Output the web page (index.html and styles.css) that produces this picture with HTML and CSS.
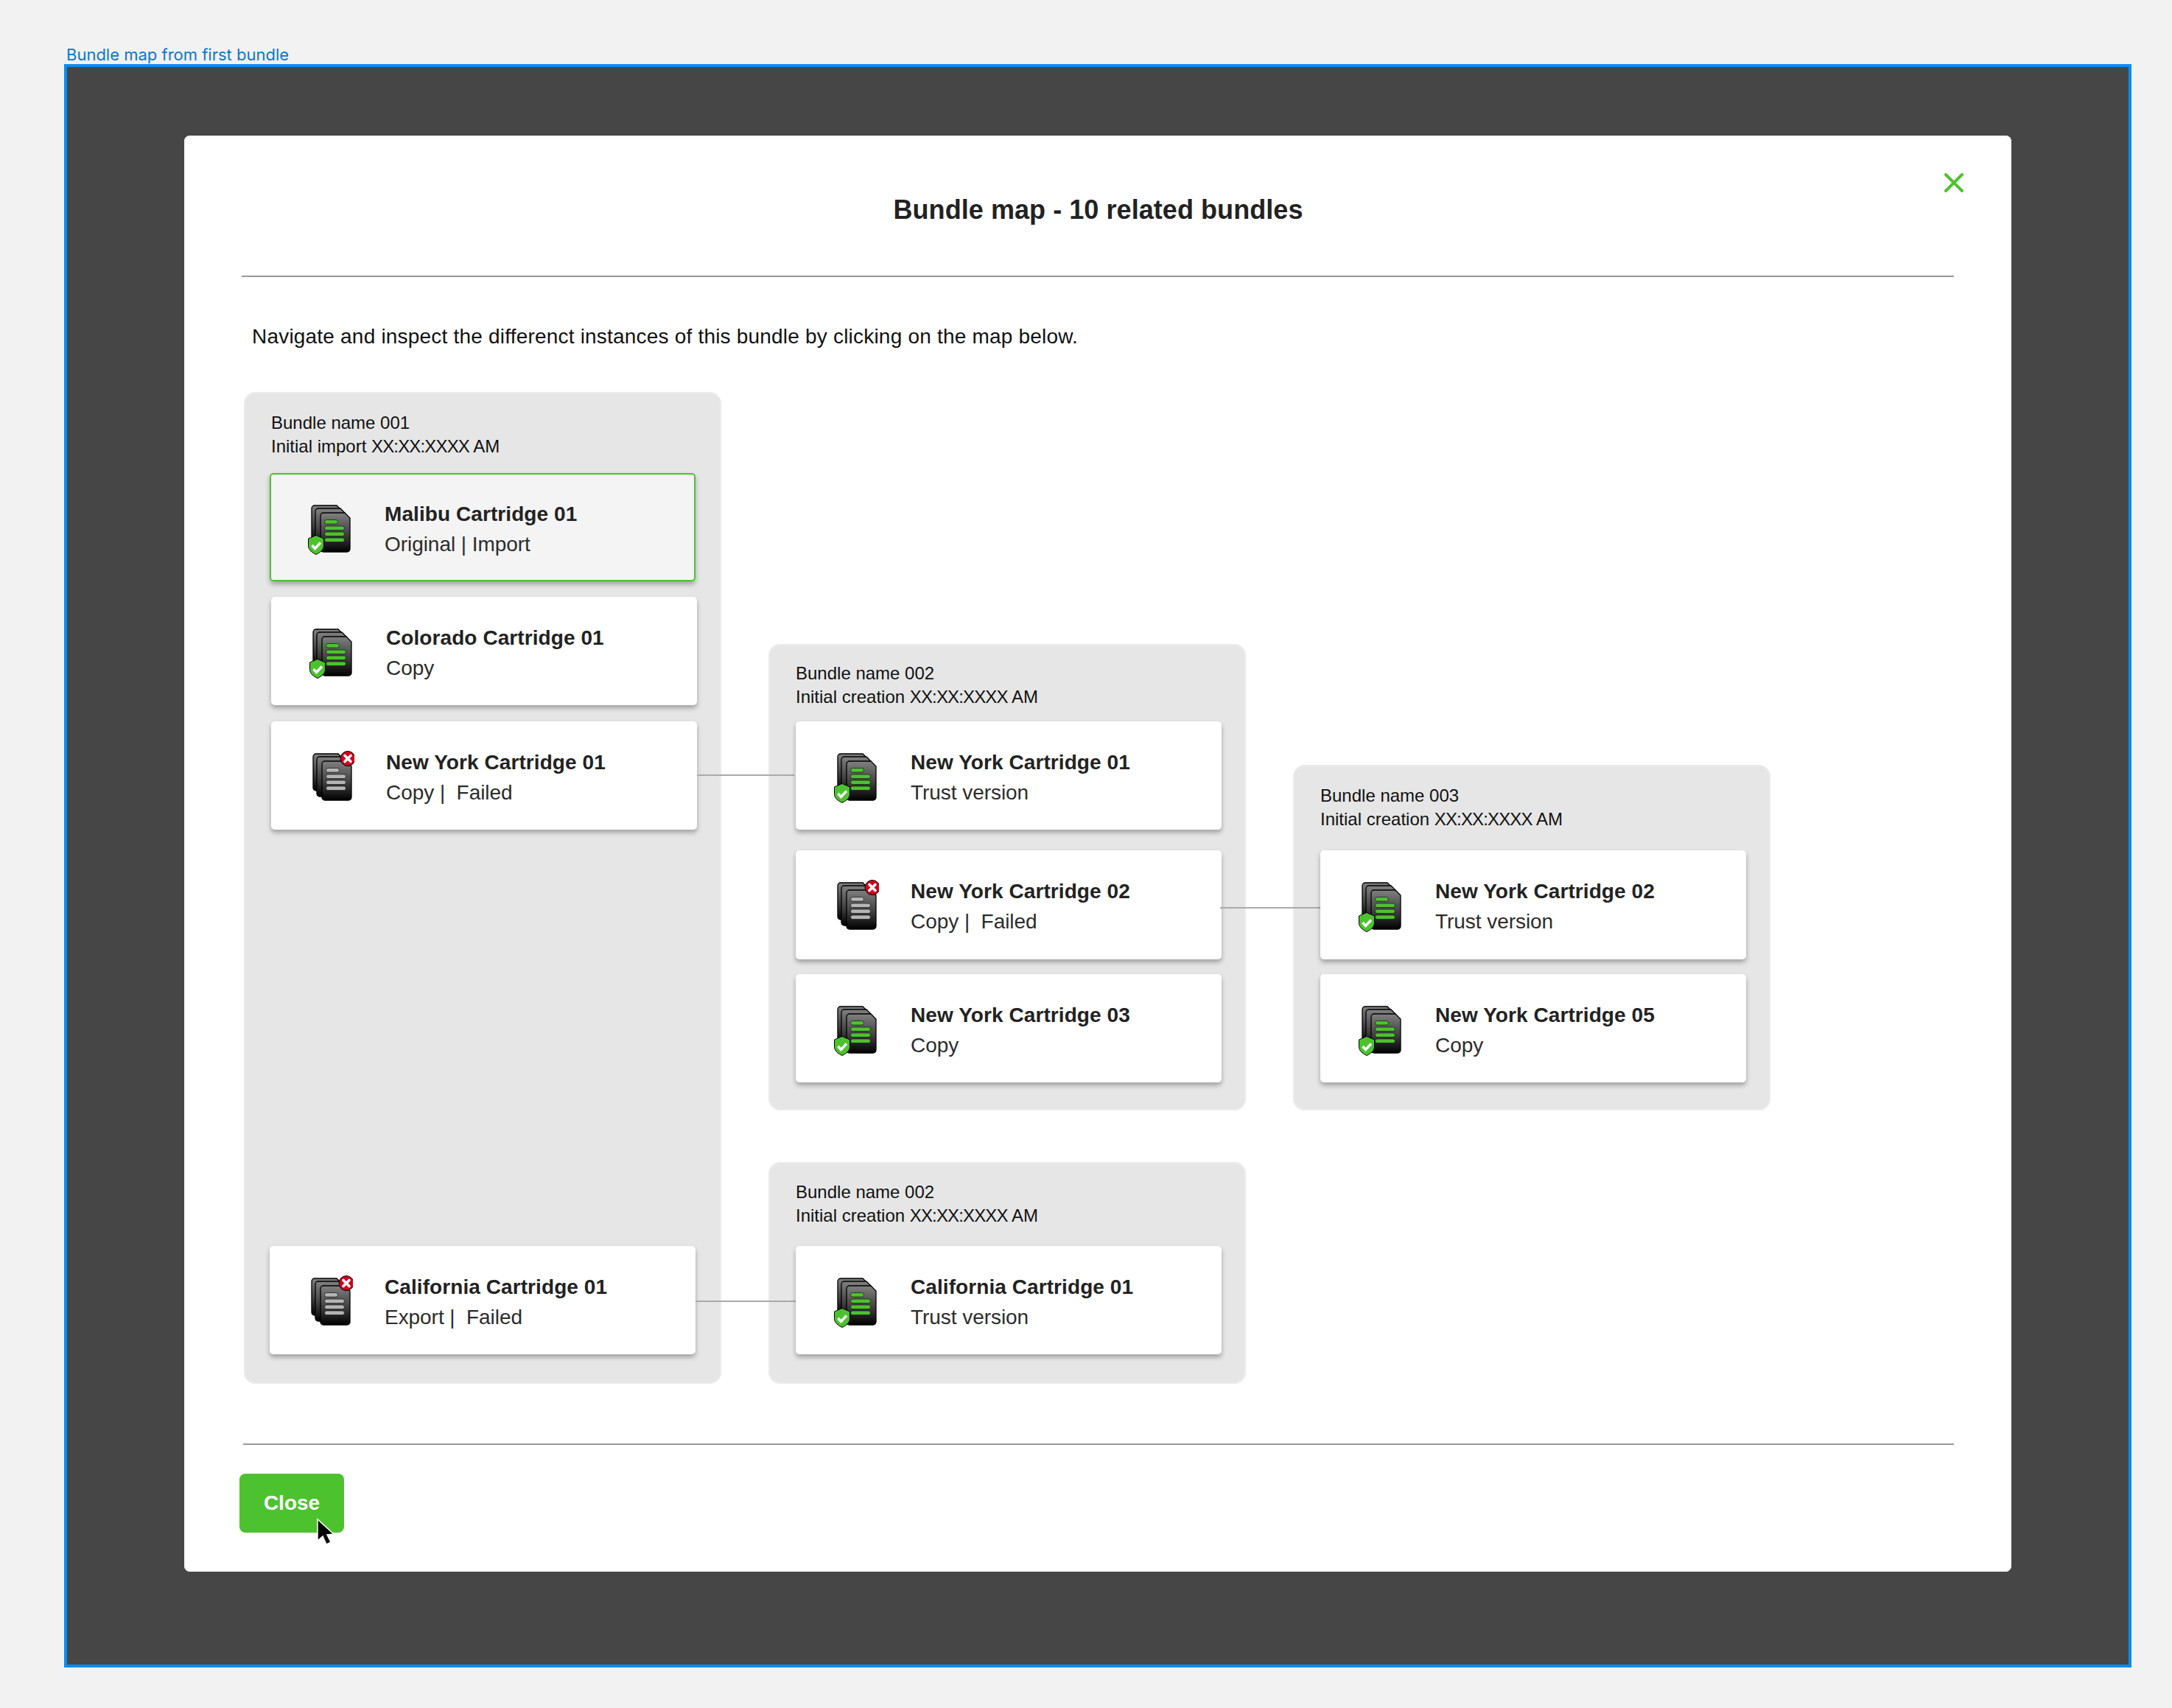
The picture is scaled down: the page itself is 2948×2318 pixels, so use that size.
FILE: index.html
```html
<!DOCTYPE html>
<html lang="en">
<head>
<meta charset="utf-8">
<title>Bundle map</title>
<link rel="stylesheet" href="styles.css">
</head>
<body>
<svg class="defs" aria-hidden="true">
  <defs>
    <linearGradient id="pg" x1="0" y1="0" x2="0" y2="1">
      <stop offset="0" stop-color="#808080"/>
      <stop offset="0.55" stop-color="#404040"/>
      <stop offset="1" stop-color="#000"/>
    </linearGradient>
    <symbol id="stack" viewBox="0 -3 62 72">
      <path d="M10 1h30l6 6v40a4 4 0 0 1-4 4H10a4 4 0 0 1-4-4V5a4 4 0 0 1 4-4z" fill="url(#pg)" stroke="#000" stroke-width="1.3"/>
      <path d="M15 5h30l6 6v44a4 4 0 0 1-4 4H15a4 4 0 0 1-4-4V9a4 4 0 0 1 4-4z" fill="url(#pg)" stroke="#000" stroke-width="1.3"/>
      <path d="M22 11h29l7 7v42a4 4 0 0 1-4 4H22a4 4 0 0 1-4-4V15a4 4 0 0 1 4-4z" fill="url(#pg)" stroke="#000" stroke-width="1.3"/>
    </symbol>
    <symbol id="ok" viewBox="0 -3 62 72">
      <use href="#stack" x="0" y="-3" width="62" height="72"/>
      <g fill="#4dc22f" stroke="#111" stroke-width="0.7">
        <rect x="23.5" y="20.5" width="18" height="5.6" rx="2.8"/>
        <rect x="23.5" y="29" width="27" height="5.6" rx="2.8"/>
        <rect x="23.5" y="37" width="27" height="5.6" rx="2.8"/>
        <rect x="23.5" y="45" width="27" height="5.6" rx="2.8"/>
      </g>
      <path d="M12 41.500l10.500 4.500v9.500c0 6-5.500 9.500-10.500 12c-5-2.500-10.500-6-10.500-12v-9.500z" fill="#4dc22f" stroke="#000" stroke-width="1"/>
      <path d="M6.500 55l4 4.500l7.500-8" fill="none" stroke="#fff" stroke-width="3.400"/>
    </symbol>
    <symbol id="bad" viewBox="0 -3 62 72">
      <use href="#stack" x="0" y="-3" width="62" height="72"/>
      <g fill="#b5b5b5" stroke="#111" stroke-width="0.7">
        <rect x="23.5" y="20.5" width="18" height="5.6" rx="2.8"/>
        <rect x="23.5" y="29" width="27" height="5.6" rx="2.8"/>
        <rect x="23.5" y="37" width="27" height="5.6" rx="2.8"/>
        <rect x="23.5" y="45" width="27" height="5.6" rx="2.8"/>
      </g>
      <circle cx="53" cy="7.500" r="10" fill="#d0021b" stroke="#000" stroke-width="1"/>
      <path d="M49 3.500l8 8M57 3.500l-8 8" fill="none" stroke="#fff" stroke-width="3.600" stroke-linecap="round"/>
    </symbol>
  </defs>
</svg>

<div class="frame-label">Bundle map from first bundle</div>
<main class="frame">
  <section class="modal">
    <svg class="close-x" viewBox="0 0 26 26"><path d="M2 2l22 22M24 2L2 24"/></svg>
    <h1 class="title">Bundle map - 10 related bundles</h1>
    <hr class="rule rule-top">
    <p class="intro">Navigate and inspect the differenct instances of this bundle by clicking on the map below.</p>

    <div class="map">
      <div class="col col-1">
        <div class="group group-full">
          <div class="head head-a">Bundle name 001<br>Initial import <span class="stamp">XX:XX:XXXX</span> AM</div>
          <div class="card card-a selected">
            <svg class="icon"><use href="#ok"/></svg>
            <div class="txt"><div class="name">Malibu Cartridge 01</div><div class="sub">Original | Import</div></div>
          </div>
          <div class="card card-b gap-21">
            <svg class="icon"><use href="#ok"/></svg>
            <div class="txt"><div class="name">Colorado Cartridge 01</div><div class="sub">Copy</div></div>
          </div>
          <div class="card card-b gap-22">
            <svg class="icon"><use href="#bad"/></svg>
            <div class="txt"><div class="name">New York Cartridge 01</div><div class="sub">Copy |&nbsp; Failed</div></div>
            <span class="link link-1"></span>
          </div>
          <div class="card card-a push">
            <svg class="icon"><use href="#bad"/></svg>
            <div class="txt"><div class="name">California Cartridge 01</div><div class="sub">Export |&nbsp; Failed</div></div>
            <span class="link link-3"></span>
          </div>
        </div>
      </div>

      <div class="col col-2">
        <div class="group group-mid">
          <div class="head head-b">Bundle name 002<br>Initial creation <span class="stamp">XX:XX:XXXX</span> AM</div>
          <div class="card card-b">
            <svg class="icon"><use href="#ok"/></svg>
            <div class="txt"><div class="name">New York Cartridge 01</div><div class="sub">Trust version</div></div>
          </div>
          <div class="card card-b tall gap-28">
            <svg class="icon"><use href="#bad"/></svg>
            <div class="txt"><div class="name">New York Cartridge 02</div><div class="sub">Copy |&nbsp; Failed</div></div>
            <span class="link link-2"></span>
          </div>
          <div class="card card-b gap-20">
            <svg class="icon"><use href="#ok"/></svg>
            <div class="txt"><div class="name">New York Cartridge 03</div><div class="sub">Copy</div></div>
          </div>
        </div>
        <div class="group group-mid group-low">
          <div class="head head-d">Bundle name 002<br>Initial creation <span class="stamp">XX:XX:XXXX</span> AM</div>
          <div class="card card-b">
            <svg class="icon"><use href="#ok"/></svg>
            <div class="txt"><div class="name">California Cartridge 01</div><div class="sub">Trust version</div></div>
          </div>
        </div>
      </div>

      <div class="col col-3">
        <div class="group group-mid">
          <div class="head head-c">Bundle name 003<br>Initial creation <span class="stamp">XX:XX:XXXX</span> AM</div>
          <div class="card card-b tall">
            <svg class="icon"><use href="#ok"/></svg>
            <div class="txt"><div class="name">New York Cartridge 02</div><div class="sub">Trust version</div></div>
          </div>
          <div class="card card-b gap-20">
            <svg class="icon"><use href="#ok"/></svg>
            <div class="txt"><div class="name">New York Cartridge 05</div><div class="sub">Copy</div></div>
          </div>
        </div>
      </div>
    </div>

    <hr class="rule rule-low">
    <div class="foot">
      <button class="btn" type="button">Close</button>
      <svg class="cursor" viewBox="0 0 26 40"><path d="M2 2v29l7-6l5 11l6-3l-5-10l9-1z" fill="#000" stroke="#fff" stroke-width="1.5"/></svg>
    </div>
  </section>
</main>
</body>
</html>
```
FILE: styles.css
```css
* { box-sizing: border-box; }
html, body { margin: 0; padding: 0; }
body {
  width: 2948px;
  height: 2318px;
  background: #f2f2f2;
  padding: 62px 0 0 87px;
  font-family: "Liberation Sans", Arial, sans-serif;
  color: #1f1f1f;
  overflow: hidden;
}
.defs { position: absolute; width: 0; height: 0; }

.frame-label {
  font-family: Inter, sans-serif;
  font-size: 22px;
  line-height: 25px;
  color: #0a78cc;
  padding-left: 3px;
}
.frame {
  width: 2806px;
  height: 2176px;
  border: 4px solid #0a8cf2;
  background: #464646;
  padding: 93px 0 0 159px;
}
.modal {
  position: relative;
  width: 2480px;
  height: 1949px;
  background: #fff;
  border-radius: 8px;
  padding: 0 78px 0 79px;
  box-shadow: inset 0 0 0 2px #f6f6f6;
}
.close-x {
  position: absolute;
  left: 2389px;
  top: 51px;
  width: 26px;
  height: 26px;
  fill: none;
  stroke: #4dc22f;
  stroke-width: 4;
  stroke-linecap: round;
}
.title {
  margin: 0;
  padding-top: 81px;
  font-size: 36px;
  line-height: 40px;
  height: 190px;
  font-weight: 700;
  letter-spacing: 0.06px;
  text-align: center;
  color: #222;
}
.rule {
  margin: 0;
  border: 0;
  height: 2px;
  background: #999;
}
.rule-top { margin-left: -1px; }
.rule-low { margin: 81px 0 0 1px; }
.intro {
  margin: 63px 0 0 13px;
  font-size: 28px;
  line-height: 36px;
  letter-spacing: 0.2px;
  color: #111;
}
.map {
  display: flex;
  gap: 64px;
  margin: 57px 0 0 2px;
  height: 1346px;
}
.col { width: 648px; display: flex; flex-direction: column; }
.col-2 { padding-top: 342px; }
.col-3 { padding-top: 506px; }
.group {
  background: #e6e6e6;
  border-radius: 16px;
  box-shadow: inset 0 0 0 2px #ebebeb;
  padding: 0 37px;
  display: flex;
  flex-direction: column;
}
.group-full { height: 1346px; padding-left: 35px; }
.group-mid { height: 633px; }
.col-3 .group-mid { height: 469px; }
.group-low { height: 301px; margin-top: 70px; }
.head { font-size: 24px; line-height: 32px; color: #111; padding-left: 2px; }
.stamp { letter-spacing: -0.85px; }
.head-a { padding-top: 26px; padding-bottom: 20px; }
.head-b { padding-top: 24px; padding-bottom: 17px; padding-left: 0; }
.head-c { padding-top: 26px; padding-bottom: 26px; padding-left: 0; }
.head-d { padding-top: 25px; padding-bottom: 25px; padding-left: 0; }
.card {
  position: relative;
  flex: none;
  height: 147px;
  background: #fff;
  border-radius: 5px;
  box-shadow: 0 4px 6px rgba(0, 0, 0, 0.3);
  display: flex;
  align-items: flex-start;
  padding: 36px 0 0 51px;
}
.card-a { width: 578px; }
.card-b { width: 578px; }
.col-1 .card-b { margin-left: 2px; }
.tall { height: 148px; }
.selected { background: #f4f4f4; box-shadow: 0 0 0 2px #4dc22f inset, 0 4px 6px rgba(0, 0, 0, 0.3); }
.gap-21 { margin-top: 21px; }
.gap-22 { margin-top: 22px; }
.gap-20 { margin-top: 20px; }
.gap-28 { margin-top: 28px; }
.push { margin-top: auto; margin-bottom: 40px; }
.icon { width: 62px; height: 72px; flex: none; margin-top: 4px; overflow: visible; }
.txt { margin-left: 43px; }
.name { font-size: 28px; line-height: 40px; font-weight: 700; letter-spacing: 0.08px; color: #222; }
.sub { font-size: 28px; line-height: 41px; letter-spacing: -0.05px; color: #2c2c2c; white-space: nowrap; }
.link { position: absolute; left: 100%; height: 2px; background: #aaa; }
.link-1 { top: 72px; width: 132px; }
.link-2 { top: 77px; left: calc(100% - 2px); width: 136px; }
.link-3 { top: 74px; width: 136px; }
.foot { position: relative; margin: 39px 0 0 -4px; }
.btn {
  display: block;
  width: 142px;
  height: 80px;
  border: 0;
  border-radius: 8px;
  background: #4dc22f;
  color: #fff;
  font-family: "Liberation Sans", Arial, sans-serif;
  font-size: 28px;
  font-weight: 700;
}
.cursor { position: absolute; left: 104px; top: 60px; width: 26px; height: 40px; }
```
